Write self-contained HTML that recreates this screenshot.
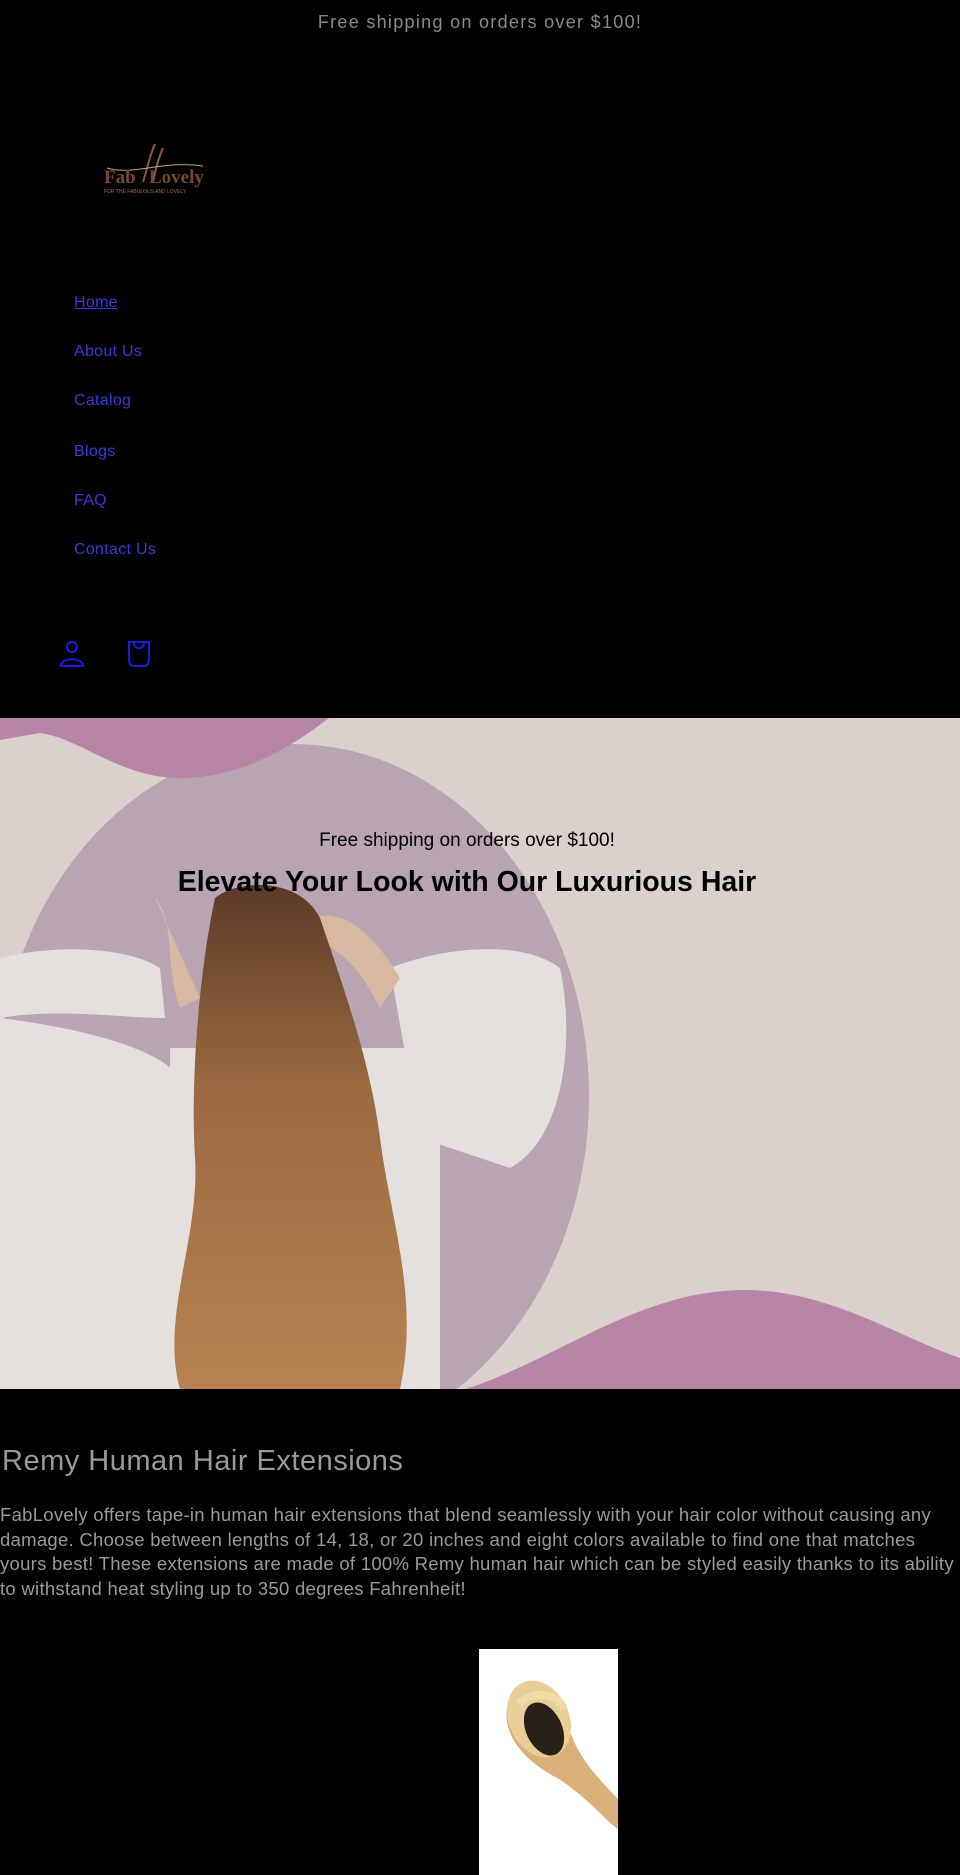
<!DOCTYPE html>
<html><head><meta charset="utf-8"><style>
*{margin:0;padding:0;box-sizing:border-box}
body{width:960px;height:1875px;background:#000;font-family:"Liberation Sans",Arial,sans-serif;position:relative;overflow:hidden}
.abs{position:absolute}
.ann{top:12px;left:0;width:960px;text-align:center;color:#8a8a8a;font-size:18px;letter-spacing:1.3px}
.nav a{position:absolute;left:74px;color:#3a3ad8;font-size:16px;text-decoration:none;letter-spacing:0.3px}
.hero{top:718px;left:0;width:960px;height:671px}
h2{position:absolute;top:1445px;left:2px;font-size:29px;font-weight:normal;color:#9a9a9a;letter-spacing:0.5px}
p.d{position:absolute;top:1503px;left:0;width:962px;font-size:18.5px;line-height:24.6px;color:#9a9a9a;letter-spacing:0.28px}
</style></head><body>
<div class="abs ann">Free shipping on orders over $100!</div>
<div class="abs" style="left:103px;top:140px;width:104px;height:58px">
<svg width="104" height="58" viewBox="0 0 104 58">
<path d="M40 42 C44 30 47 14 52 4 M50 42 C53 28 56 16 60 8" stroke="#8a5a40" stroke-width="2" fill="none"/>
<path d="M4 28 C30 36 60 20 100 26" stroke="#c8a080" stroke-width="1" fill="none"/>
<text x="1" y="43" font-family="Liberation Serif,serif" font-size="19" font-weight="bold" fill="#7a4630">Fab</text>
<text x="46" y="43" font-family="Liberation Serif,serif" font-size="19" font-weight="bold" fill="#7a4630">Lovely</text>
<text x="1" y="53" font-family="Liberation Sans,sans-serif" font-size="5" fill="#a07050">FOR THE FABULOUS AND LOVELY</text>
</svg></div>
<div class="nav">
<a style="top:294px;text-decoration:underline">Home</a>
<a style="top:343px">About Us</a>
<a style="top:392px">Catalog</a>
<a style="top:443px">Blogs</a>
<a style="top:492px">FAQ</a>
<a style="top:541px">Contact Us</a>
</div>
<svg class="abs" style="left:58px;top:638px" width="28" height="30" viewBox="0 0 28 30"><circle cx="14" cy="9" r="5" stroke="#1a1ae0" stroke-width="2" fill="none"/><path d="M3 28 C3 19 25 19 25 28 Z" stroke="#1a1ae0" stroke-width="2" fill="none"/></svg>
<svg class="abs" style="left:125px;top:638px" width="28" height="30" viewBox="0 0 28 30"><path d="M4 4 H24 V22 C24 26 22 28 18 28 H10 C6 28 4 26 4 22 Z" stroke="#1a1ae0" stroke-width="2" fill="none"/><path d="M9 5 C9 12 19 12 19 5" stroke="#1a1ae0" stroke-width="2" fill="none"/></svg>

<svg class="abs hero" viewBox="0 0 960 671">
<defs><linearGradient id="hg" x1="0" y1="0" x2="0" y2="1"><stop offset="0" stop-color="#5a3a28"/><stop offset="0.4" stop-color="#9a6a40"/><stop offset="1" stop-color="#b88250"/></linearGradient></defs>
<rect width="960" height="671" fill="#dbd0cb"/>
<ellipse cx="293" cy="378" rx="296" ry="352" fill="#b9a4b1"/>
<path d="M0 0 L329 0 C290 30 240 60 180 60 C120 60 80 20 40 15 L0 22 Z" fill="#b785a5"/>
<path d="M466 671 C560 640 640 572 745 572 C830 572 900 620 960 640 L960 671 Z" fill="#b785a5"/>
<path d="M0 240 C60 225 130 230 160 250 L165 300 C120 300 60 290 0 300 Z" fill="#e4e0dd"/>
<path d="M390 250 C440 230 520 220 560 250 C575 320 565 420 510 450 L420 420 Z" fill="#e4e0dd"/>
<path d="M0 300 C80 310 160 330 180 360 L190 671 L0 671 Z" fill="#e4e0dd"/>
<path d="M170 330 L440 330 L440 671 L170 671 Z" fill="#e4e0dd"/>
<path d="M155 180 C175 200 165 250 180 290 L200 280 Z" fill="#d8b8a0"/>
<path d="M310 200 C340 190 370 210 400 260 L380 290 C360 250 340 230 310 220 Z" fill="#d8b8a0"/>
<path d="M215 180 C240 160 300 160 320 200 C340 260 370 340 380 420 C390 500 420 580 400 671 L180 671 C160 600 200 520 195 440 C190 360 200 250 215 180 Z" fill="url(#hg)"/>
<text x="467" y="128" text-anchor="middle" font-family="Liberation Sans,sans-serif" font-size="19" fill="#000">Free shipping on orders over $100!</text>
<text x="467" y="173" text-anchor="middle" font-family="Liberation Sans,sans-serif" font-size="28.5" font-weight="bold" fill="#000">Elevate Your Look with Our Luxurious Hair</text>
</svg>

<h2>Remy Human Hair Extensions</h2>
<p class="d">FabLovely offers tape-in human hair extensions that blend seamlessly with your hair color without causing any damage. Choose between lengths of 14, 18, or 20 inches and eight colors available to find one that matches yours best! These extensions are made of 100% Remy human hair which can be styled easily thanks to its ability to withstand heat styling up to 350 degrees Fahrenheit!</p>

<svg class="abs" style="left:479px;top:1649px" width="139" height="226" viewBox="0 0 139 226">
<rect width="139" height="226" fill="#fff"/>
<path d="M30 50 C20 80 40 110 80 130 C110 150 130 175 139 180 L139 150 C120 130 100 110 90 80 Z" fill="#d9b07a"/>
<ellipse cx="60" cy="70" rx="30" ry="40" fill="#e8cf98" transform="rotate(-25 60 70)"/>
<ellipse cx="65" cy="80" rx="18" ry="28" fill="#2a2018" transform="rotate(-25 65 80)"/>
<path d="M40 55 C55 40 80 45 85 60" stroke="#f0dca8" stroke-width="8" fill="none"/>
</svg>
</body></html>
